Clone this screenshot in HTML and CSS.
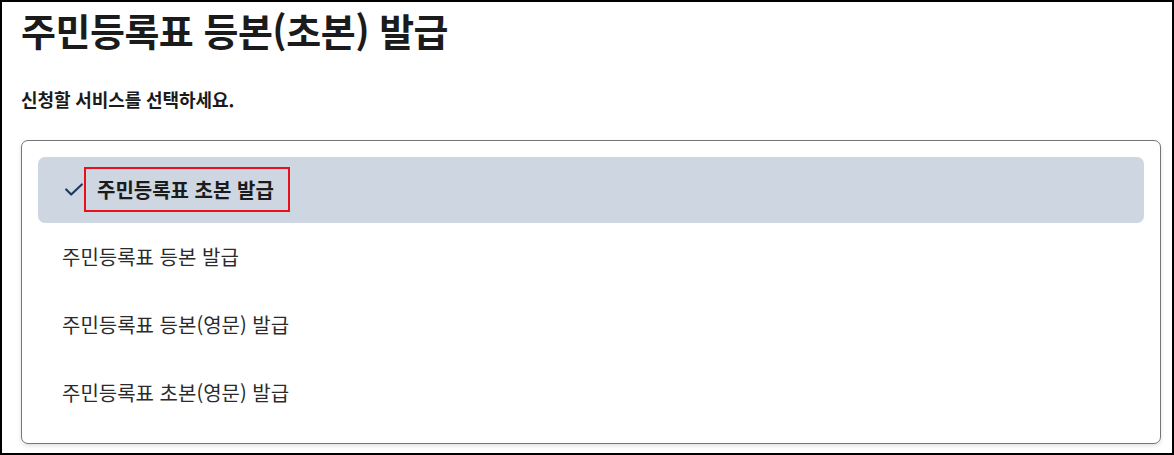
FILE: index.html
```html
<!DOCTYPE html>
<html lang="ko">
<head>
<meta charset="utf-8">
<title>주민등록표 등본(초본) 발급</title>
<link rel="stylesheet" href="styles.css">
</head>
<body>
<div class="frame">
  <h1 class="title">주민등록표 등본(초본) 발급</h1>
  <p class="subtitle">신청할 서비스를 선택하세요.</p>
  <div class="card">
    <ul class="options">
      <li class="option selected">
        <svg class="check" width="19" height="14" viewBox="0 0 19 14" aria-hidden="true">
          <path d="M1.2 6.5 L6.2 11.5 L16.8 1.5" fill="none" stroke="#1f3a62" stroke-width="2.2" stroke-linecap="round" stroke-linejoin="round"/>
        </svg>
        <span class="highlight">주민등록표 초본 발급</span>
      </li>
      <li class="option">주민등록표 등본 발급</li>
      <li class="option">주민등록표 등본(영문) 발급</li>
      <li class="option">주민등록표 초본(영문) 발급</li>
    </ul>
  </div>
</div>
</body>
</html>
```

FILE: styles.css
```css
* { box-sizing: border-box; }
html, body { margin: 0; padding: 0; background: #fff; }
body {
  font-family: "Noto Sans CJK KR", "Noto Sans", sans-serif;
  color: #1e1e1e;
}
.frame {
  width: 1174px;
  height: 455px;
  border: 2px solid #000;
  overflow: hidden;
  padding: 0 11px 0 19px;
}
.title {
  margin: 5px 0 0;
  font-size: 38px;
  line-height: 1.2;
  font-weight: 700;
  letter-spacing: -0.5px;
  color: #1b1b1b;
}
.subtitle {
  margin: 33px 0 0;
  font-size: 18px;
  line-height: 26px;
  font-weight: 700;
  letter-spacing: -0.1px;
  color: #1b1b1b;
}
.card {
  margin-top: 28px;
  border: 1px solid #767676;
  border-radius: 7px;
  padding: 16px 16px 16px;
  box-shadow: 0 2px 4px rgba(0, 0, 0, 0.12);
  background: #fff;
}
.options {
  list-style: none;
  margin: 0;
  padding: 0;
}
.option {
  display: flex;
  align-items: center;
  height: 68px;
  padding-left: 24px;
  font-size: 20px;
  color: #2b2b2b;
}
.option.selected {
  height: 66px;
  padding-left: 27px;
  background: #cdd6e1;
  border-radius: 7px;
  font-weight: 700;
  color: #1b1b1b;
}
.check {
  flex: none;
}
.highlight {
  display: inline-flex;
  align-items: center;
  height: 45px;
  padding: 0 14px 0 11px;
  border: 2px solid #e8101a;
}
```
